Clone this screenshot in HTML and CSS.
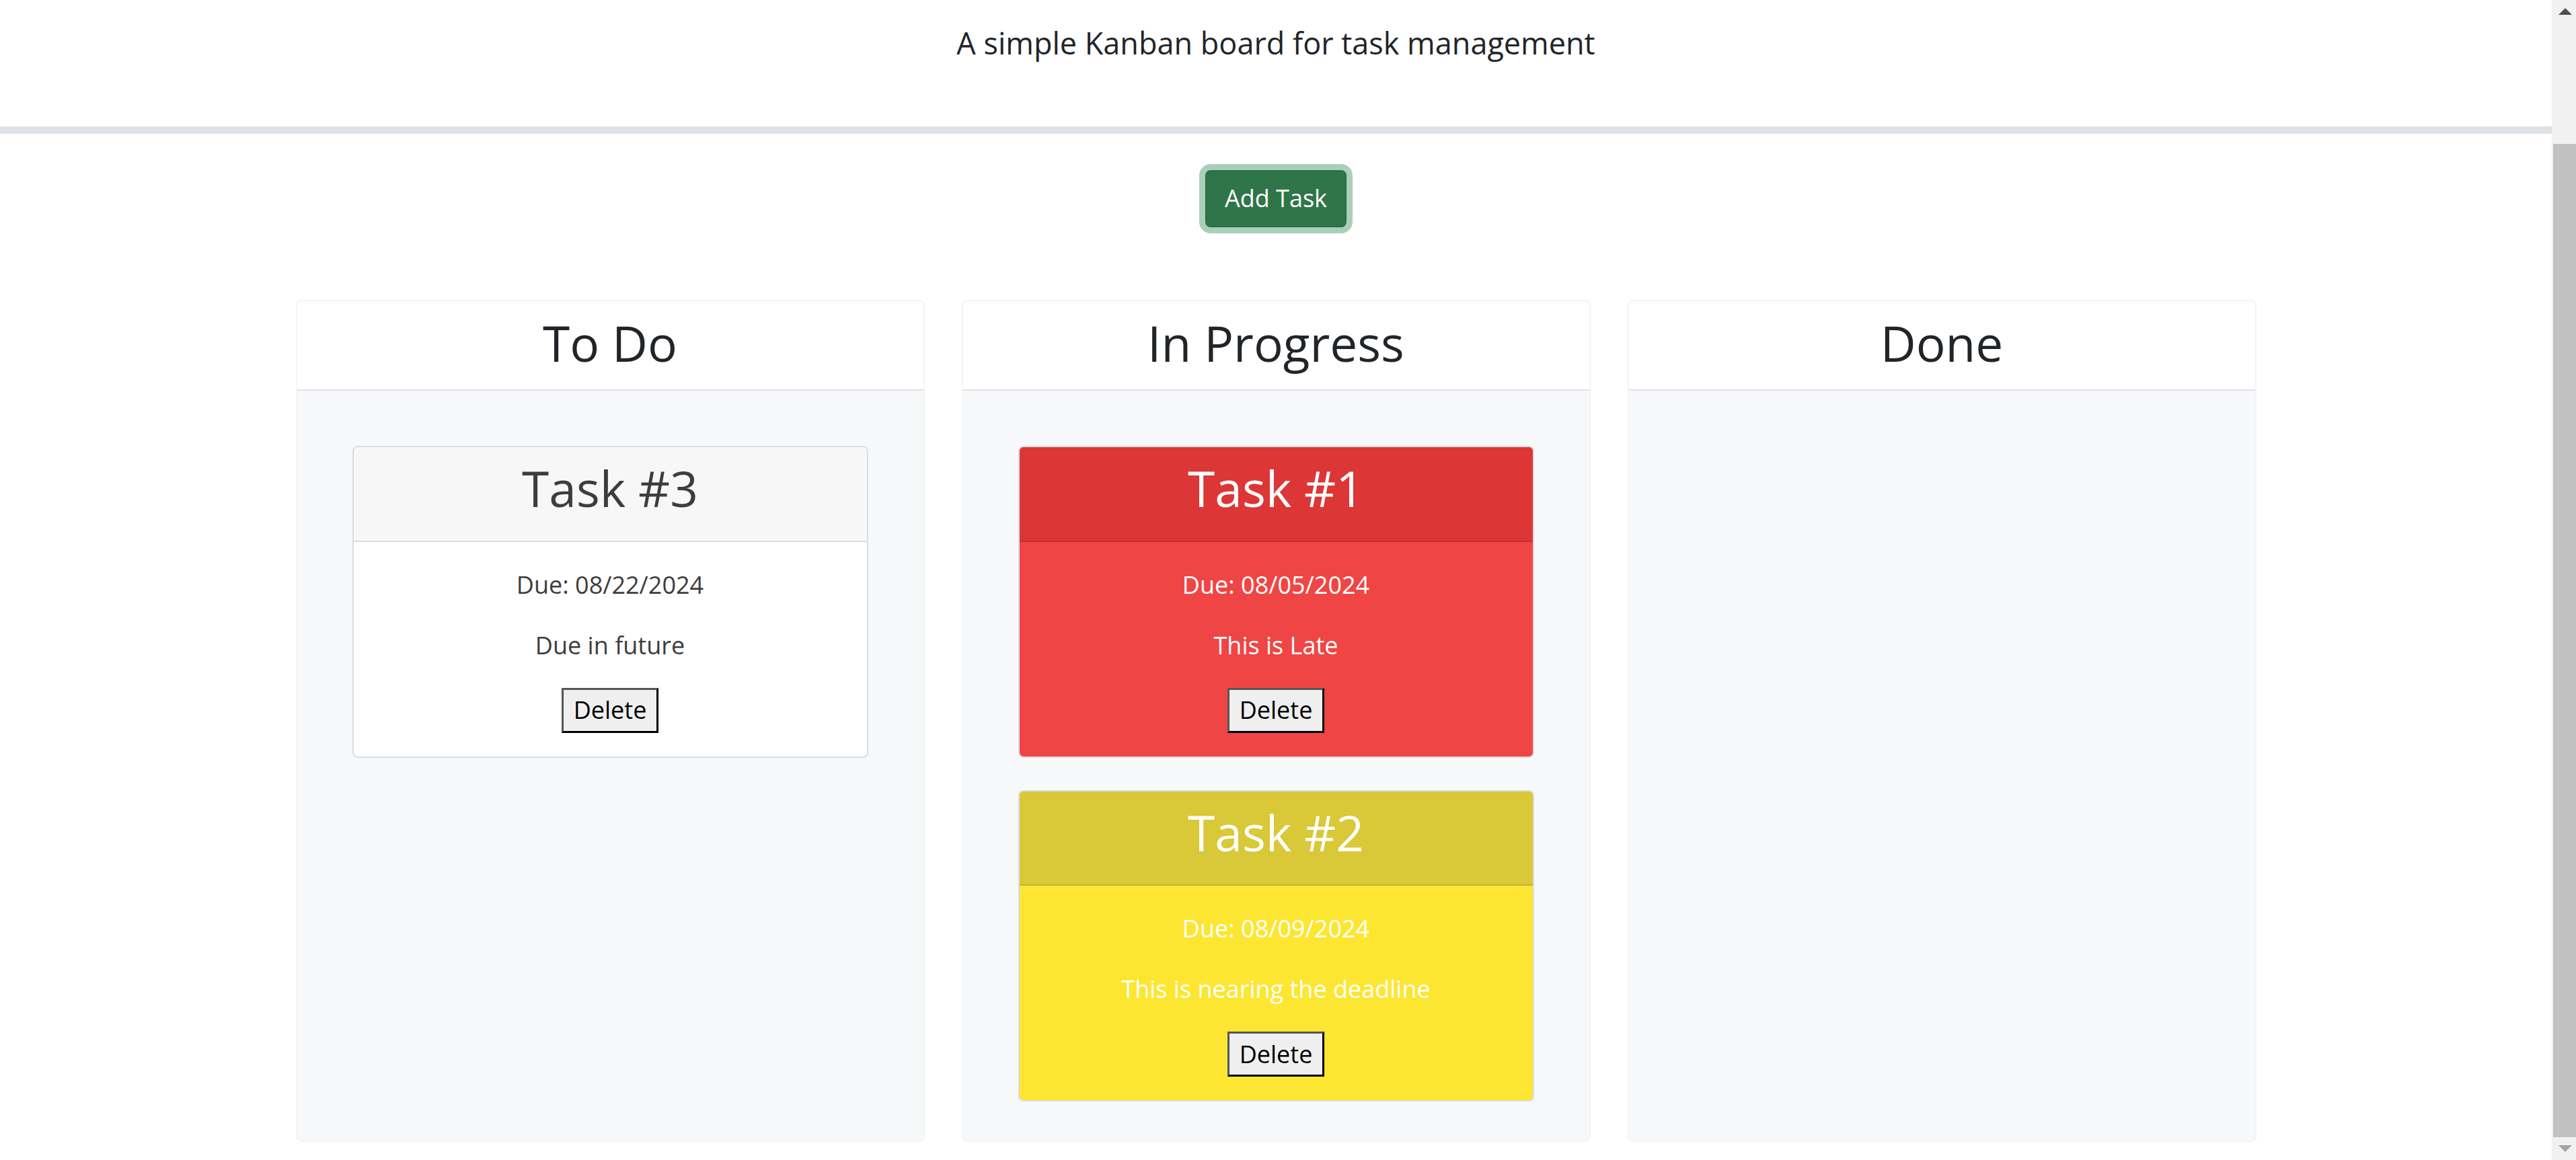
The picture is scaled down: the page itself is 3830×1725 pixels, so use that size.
FILE: index.html
```html
<!DOCTYPE html>
<html lang="en">
<head>
  <meta charset="UTF-8">
  <title>Task Board</title>
  <link rel="stylesheet" href="styles.css">
</head>
<body>
  <div class="app">
    <header class="site-header">
      <p class="lead">A simple Kanban board for task management</p>
    </header>

    <main class="page">
      <div class="actions">
        <button class="btn-add" type="button">Add Task</button>
      </div>

      <section class="board">
        <div class="lane">
          <div class="lane-header"><h2>To Do</h2></div>
          <div class="lane-body">
            <div class="task">
              <div class="task-header"><h3>Task #3</h3></div>
              <div class="task-body">
                <p>Due: 08/22/2024</p>
                <p>Due in future</p>
                <button class="btn-delete" type="button">Delete</button>
              </div>
            </div>
          </div>
        </div>

        <div class="lane">
          <div class="lane-header"><h2>In Progress</h2></div>
          <div class="lane-body">
            <div class="task task-late">
              <div class="task-header"><h3>Task #1</h3></div>
              <div class="task-body">
                <p>Due: 08/05/2024</p>
                <p>This is Late</p>
                <button class="btn-delete" type="button">Delete</button>
              </div>
            </div>
            <div class="task task-soon">
              <div class="task-header"><h3>Task #2</h3></div>
              <div class="task-body">
                <p>Due: 08/09/2024</p>
                <p>This is nearing the deadline</p>
                <button class="btn-delete" type="button">Delete</button>
              </div>
            </div>
          </div>
        </div>

        <div class="lane">
          <div class="lane-header"><h2>Done</h2></div>
          <div class="lane-body"></div>
        </div>
      </section>
    </main>
  </div>

  <div class="scrollbar" aria-hidden="true">
    <div class="sb-button"><span class="sb-arrow-up"></span></div>
    <div class="sb-track"><div class="sb-thumb"></div></div>
    <div class="sb-button"><span class="sb-arrow-down"></span></div>
  </div>
</body>
</html>
```

FILE: styles.css
```css
html, body {
  margin: 0;
}

body {
  display: flex;
  height: 100vh;
  overflow: hidden;
  font-family: "Open Sans", "Liberation Sans", sans-serif;
  font-size: 36px;
  line-height: 1.5;
  color: #212529;
  background: #fff;
}

.app {
  flex: 1;
  min-width: 0;
}

/* window scrollbar */
.scrollbar {
  width: 36px;
  flex: none;
  display: flex;
  flex-direction: column;
  background: #f1f1f1;
}
.sb-button {
  height: 34px;
  flex: none;
  display: flex;
  align-items: center;
  justify-content: center;
  padding-left: 4px;
}
.sb-arrow-up {
  width: 0;
  height: 0;
  border-left: 10px solid transparent;
  border-right: 10px solid transparent;
  border-bottom: 10px solid #505050;
}
.sb-arrow-down {
  width: 0;
  height: 0;
  border-left: 10px solid transparent;
  border-right: 10px solid transparent;
  border-top: 10px solid #a3a3a3;
}
.sb-track {
  flex: 1;
  display: flex;
  flex-direction: column;
  padding: 180px 0 0 2px;
}
.sb-thumb {
  flex: 1;
  background: #c1c1c1;
}

/* header */
.site-header {
  text-align: center;
  padding: 30px 0 54px;
  border-bottom: 11px solid #dee2e6;
}
.lead {
  margin: 0 0 36px;
  font-size: 45px;
  line-height: 1.5;
}

/* main */
.page {
  padding: 54px 0 0;
}
.actions {
  display: flex;
  justify-content: center;
  margin-bottom: 108px;
}
.btn-add {
  font: inherit;
  line-height: 54px;
  color: #fff;
  background: #2f7549;
  border: 2px solid #2c6c44;
  border-radius: 8px;
  padding: 13.5px 27px;
  box-shadow: 0 0 0 9px #a9cfba;
}

.board {
  display: grid;
  grid-template-columns: repeat(3, 935px);
  column-gap: 55px;
  justify-content: center;
}

.lane {
  display: flex;
  flex-direction: column;
  border: 2px solid #f3f4f5;
  border-radius: 8px;
  overflow: hidden;
  background: #f7f8fa;
}
.lane-header {
  background: #fff;
  text-align: center;
  padding: 18px 0 26px;
  border-bottom: 2px solid #dee2e6;
}
.lane-header h2 {
  margin: 0;
  font-size: 73px;
  line-height: 1.2;
  font-weight: 400;
}
.lane-body {
  flex: 1;
  display: flex;
  flex-direction: column;
  gap: 48px;
  padding: 82px 82px 58px;
}

/* task cards */
.task {
  border: 2px solid #dadde1;
  border-radius: 8px;
  overflow: hidden;
  text-align: center;
  background: #fff;
  color: #3d3d3d;
}
.task-header {
  padding: 17px 0 34px;
  background: #f7f7f7;
  border-bottom: 2px solid rgba(0, 0, 0, 0.1);
}
.task-header h3 {
  margin: 0;
  font-size: 73px;
  line-height: 1.2;
  font-weight: 400;
}
.task-body {
  padding: 37px 36px 35px;
}
.task-body p {
  margin: 0 0 36px;
}

.task-late {
  color: #fff;
  background: #f04545;
}
.task-late .task-header {
  background: #dc3636;
}
.task-soon {
  color: #fff;
  background: #fce631;
}
.task-soon .task-header {
  background: #d9c837;
}

.btn-delete {
  font: inherit;
  line-height: 54px;
  color: #000;
  background: #efefef;
  border: 3px solid;
  border-color: #555 #000 #000 #555;
  border-radius: 0;
  padding: 3.5px 14.5px;
}
```
